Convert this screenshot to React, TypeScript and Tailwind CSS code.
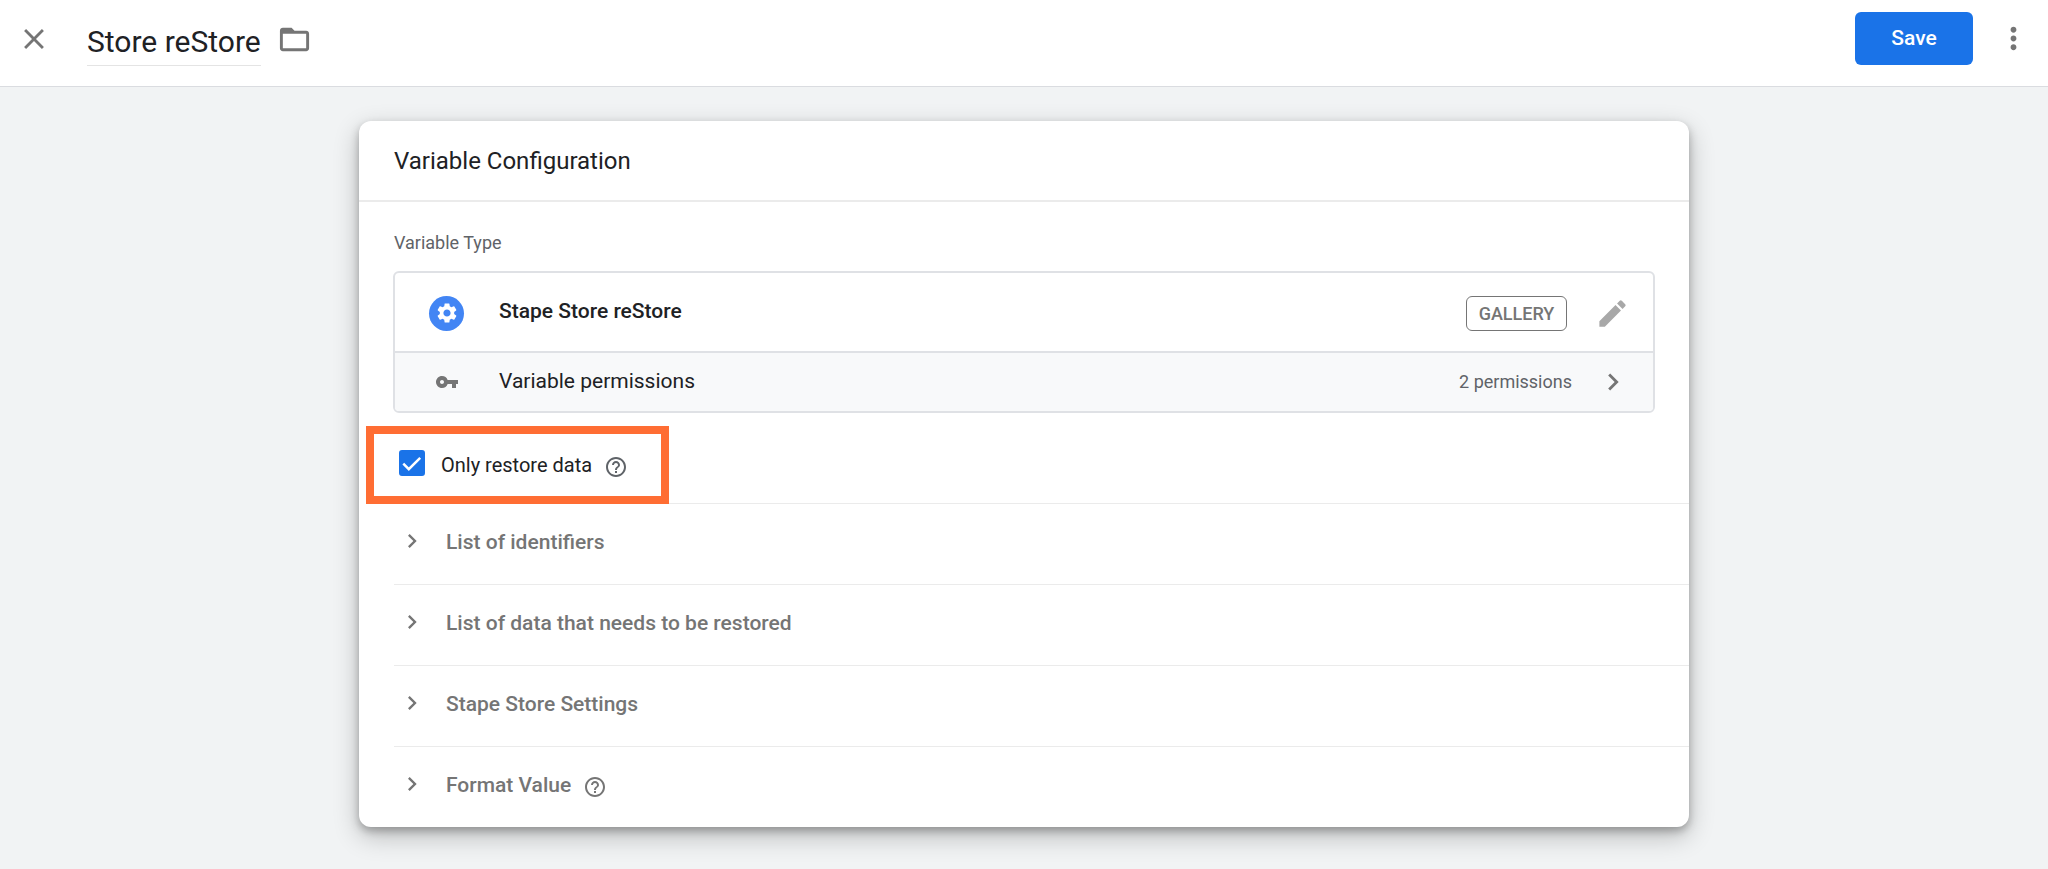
import React, { useState } from 'react';
import {
  MdChevronRight,
  MdClose,
  MdEdit,
  MdFolderOpen,
  MdHelpOutline,
  MdMoreVert,
  MdSettings,
  MdVpnKey,
} from 'react-icons/md';

interface Section {
  title: string;
  hasHelp?: boolean;
}

const sections: Section[] = [
  { title: 'List of identifiers' },
  { title: 'List of data that needs to be restored' },
  { title: 'Stape Store Settings' },
  { title: 'Format Value', hasHelp: true },
];

const Header: React.FC = () => {
  const [name, setName] = useState('Store reStore');

  return (
    <header className="flex h-[87px] items-center border-b border-[#dadce0] bg-white px-[17px]">
      <button type="button" aria-label="Close" className="-mt-2 text-[#757575]">
        <MdClose className="size-[34px]" />
      </button>
      <input
        aria-label="Variable name"
        value={name}
        onChange={(e) => setName(e.target.value)}
        className="-mt-1 ml-9 h-[50px] field-sizing-content border-b border-[#e4e4e4] pt-0.5 font-['Google_Sans',Roboto,sans-serif] text-[30px] text-[#202124] outline-none"
      />
      <button type="button" aria-label="Move to folder" className="-mt-2 ml-4 text-[#757575]">
        <MdFolderOpen className="size-[35px]" />
      </button>
      <button
        type="button"
        className="-mt-2.5 ml-auto h-[53px] w-[118px] rounded-md bg-[#1a73e8] pt-0.5 text-[21px] font-medium text-white"
      >
        Save
      </button>
      <button type="button" aria-label="More actions" className="-mt-2.5 ml-[23px] text-[#757575]">
        <MdMoreVert className="size-[35px]" />
      </button>
    </header>
  );
};

const VariableType: React.FC = () => (
  <div className="overflow-hidden rounded-md border-2 border-[#dfe1e5]">
    <div className="flex h-[78px] items-center pt-0.5 pr-[23px] pl-[34px]">
      <span className="flex size-[35px] items-center justify-center rounded-full bg-[#4285f4] text-white">
        <MdSettings className="size-6" />
      </span>
      <span className="ml-[35px] pb-0.5 text-[21px] font-medium text-[#202124]">Stape Store reStore</span>
      <button
        type="button"
        className="ml-auto h-[35px] w-[101px] rounded-md border border-[#757575] pt-0.5 text-lg font-medium text-[#757575]"
      >
        GALLERY
      </button>
      <button type="button" aria-label="Edit variable type" className="ml-7 text-[#a8a8a8]">
        <MdEdit className="size-[35px]" />
      </button>
    </div>
    <button
      type="button"
      className="flex h-[60px] w-full items-center border-t-2 border-[#dfe1e5] bg-[#f8f9fa] pr-[23px] pl-[34px] text-left"
    >
      <span className="flex w-[35px] justify-center text-[#757575]">
        <MdVpnKey className="size-6" />
      </span>
      <span className="ml-[35px] text-[21px] text-[#202124]">Variable permissions</span>
      <span className="ml-auto text-lg text-[#5f6368]">2 permissions</span>
      <MdChevronRight className="ml-6 size-[34px] text-[#757575]" />
    </button>
  </div>
);

const RestoreOption: React.FC = () => {
  const [checked, setChecked] = useState(true);

  return (
    <div className="relative flex h-[90px] items-center pt-[14px] pl-10">
      <label className="flex items-center text-xl text-[#202124]">
        <span className="mb-1 grid size-[26px]">
          <input
            type="checkbox"
            checked={checked}
            onChange={(e) => setChecked(e.target.checked)}
            className="col-start-1 row-start-1 size-[26px] appearance-none rounded-[3px] border-2 border-[#5f6368] checked:border-[#1a73e8] checked:bg-[#1a73e8]"
          />
          {checked && (
            <svg viewBox="0 0 26 26" className="pointer-events-none col-start-1 row-start-1 size-[26px]">
              <path d="M4.3 13.7 9.8 19.2 21.2 7.8" fill="none" stroke="#fff" strokeWidth="2.5" />
            </svg>
          )}
        </span>
        <span className="ml-4">Only restore data</span>
      </label>
      <button type="button" aria-label="Help" className="mt-1 ml-3 text-[#5f6368]">
        <MdHelpOutline className="size-6" />
      </button>
      <div className="pointer-events-none absolute top-[13px] left-[7px] z-10 h-[78px] w-[303px] border-8 border-[#ff6d33]" />
    </div>
  );
};

const SectionRow: React.FC<Section> = ({ title, hasHelp }) => (
  <div className="ml-[35px] flex h-[81px] items-center border-t border-[#ebebeb] pb-0.5">
    <button type="button" className="flex items-center text-[21px] font-medium text-[#757575]">
      <MdChevronRight className="mb-1 ml-1 size-7" />
      <span className="ml-5">{title}</span>
    </button>
    {hasHelp && (
      <button type="button" aria-label="Help" className="mt-0.5 ml-3 text-[#757575]">
        <MdHelpOutline className="size-6" />
      </button>
    )}
  </div>
);

export default function App() {
  return (
    <div className="min-h-screen bg-[#f1f3f4] font-[Roboto,sans-serif]">
      <Header />
      <main className="px-6 pt-[34px] pb-[42px]">
        <section className="mx-auto max-w-[1330px] rounded-xl bg-white shadow-[0_9px_26px_rgba(0,0,0,0.24),0_4px_8px_rgba(0,0,0,0.26)]">
          <h2 className="flex h-[81px] items-center border-b-2 border-[#ebebeb] px-[35px] font-['Google_Sans',Roboto,sans-serif] text-2xl text-[#202124]">
            Variable Configuration
          </h2>
          <div className="px-[34px] pt-[27px]">
            <h3 className="mb-[14px] pl-px text-lg text-[#5f6368]">Variable Type</h3>
            <VariableType />
          </div>
          <RestoreOption />
          {sections.map((section) => (
            <SectionRow key={section.title} {...section} />
          ))}
        </section>
      </main>
    </div>
  );
}
